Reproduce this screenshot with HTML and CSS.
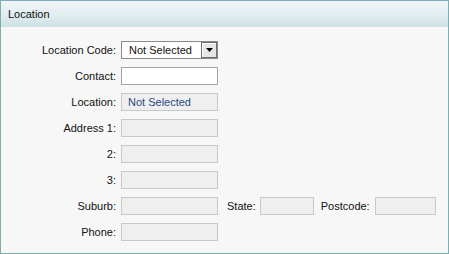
FILE: index.html
```html
<!DOCTYPE html>
<html>
<head>
<meta charset="utf-8">
<link rel="stylesheet" href="styles.css">
</head>
<body>
<div class="panel">
  <div class="panel-header">Location</div>
  <div class="panel-body">
    <div class="row">
      <span class="label">Location Code:</span>
      <div class="select">
        <span class="select-text">Not Selected</span>
        <span class="select-btn"><svg width="7" height="4" viewBox="0 0 7 4"><path d="M0 0H7L3.5 4Z" fill="#000"/></svg></span>
      </div>
    </div>
    <div class="row">
      <span class="label">Contact:</span>
      <div class="field field-white"></div>
    </div>
    <div class="row">
      <span class="label">Location:</span>
      <div class="field field-disabled"><span class="field-value">Not Selected</span></div>
    </div>
    <div class="row">
      <span class="label">Address 1:</span>
      <div class="field field-disabled"></div>
    </div>
    <div class="row">
      <span class="label">2:</span>
      <div class="field field-disabled"></div>
    </div>
    <div class="row">
      <span class="label">3:</span>
      <div class="field field-disabled"></div>
    </div>
    <div class="row">
      <span class="label">Suburb:</span>
      <div class="field field-disabled"></div>
      <span class="inline-label state-label">State:</span>
      <div class="field field-disabled field-state"></div>
      <span class="inline-label postcode-label">Postcode:</span>
      <div class="field field-disabled field-postcode"></div>
    </div>
    <div class="row">
      <span class="label">Phone:</span>
      <div class="field field-disabled"></div>
    </div>
  </div>
</div>
</body>
</html>
```
FILE: styles.css
```css
html, body {
  margin: 0;
  padding: 0;
}
body {
  font-family: "Liberation Sans", Arial, sans-serif;
  font-size: 11px;
  color: #1a1a1a;
}
.panel {
  width: 449px;
  height: 254px;
  box-sizing: border-box;
  border: 1px solid #7eaeb3;
  background: #f7f7f7;
}
.panel-header {
  height: 26px;
  line-height: 26px;
  padding-left: 7px;
  background: linear-gradient(to bottom, #f0f5f7 0%, #e2eef0 50%, #cde1e4 100%);
  color: #111;
  font-size: 11px;
}
.panel-body {
  padding-top: 14px;
  display: flex;
  flex-direction: column;
  gap: 8px;
}
.row {
  display: flex;
  align-items: center;
  height: 18px;
}
.label {
  width: 115px;
  text-align: right;
  margin-right: 5px;
  color: #111;
}
.field {
  width: 97px;
  height: 18px;
  box-sizing: border-box;
}
.field-white {
  background: #fff;
  border: 1px solid #a3a3a3;
}
.field-disabled {
  background: #efefef;
  border: 1px solid #c8c8c8;
  display: flex;
  align-items: center;
}
.field-value {
  color: #284a84;
  padding-left: 6px;
}
.select {
  width: 97px;
  height: 18px;
  box-sizing: border-box;
  background: #fff;
  border: 1px solid #8a8a8a;
  display: flex;
  align-items: center;
}
.select-text {
  flex: 1;
  padding-left: 7px;
  color: #111;
}
.select-btn {
  width: 16px;
  height: 16px;
  box-sizing: border-box;
  border: 1px solid #6e6e6e;
  background: #e6e6e6;
  box-shadow: inset 1px 1px 0 #fff;
  display: flex;
  align-items: center;
  justify-content: center;
}
.inline-label {
  color: #111;
}
.state-label {
  margin-left: 9px;
  margin-right: 4px;
}
.field-state {
  width: 54px;
}
.postcode-label {
  margin-left: 7px;
  margin-right: 5px;
}
.field-postcode {
  width: 61px;
}
```
